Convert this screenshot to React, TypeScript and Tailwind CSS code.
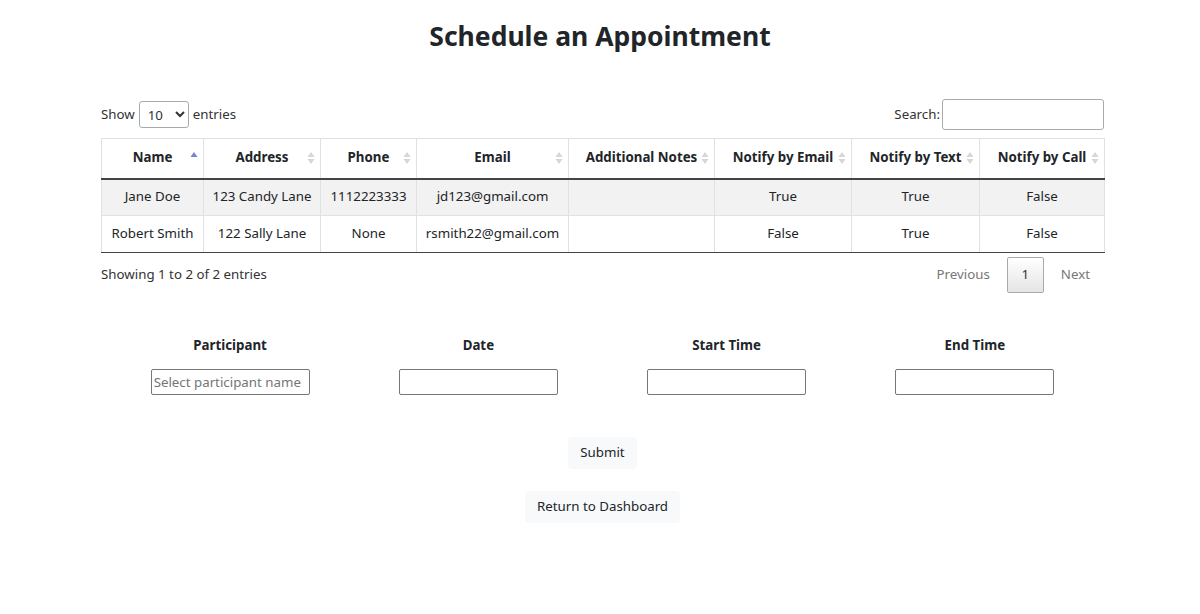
import React, { useState } from 'react';

const rows = [
  { name: 'Jane Doe', address: '123 Candy Lane', phone: '1112223333', email: 'jd123@gmail.com', notes: '', byEmail: 'True', byText: 'True', byCall: 'False' },
  { name: 'Robert Smith', address: '122 Sally Lane', phone: 'None', email: 'rsmith22@gmail.com', notes: '', byEmail: 'False', byText: 'True', byCall: 'False' },
];

const columns = [
  { label: 'Name', w: 'w-[102px]' },
  { label: 'Address', w: 'w-[117px]' },
  { label: 'Phone', w: 'w-[96px]' },
  { label: 'Email', w: 'w-[152px]' },
  { label: 'Additional Notes', w: 'w-[146px]' },
  { label: 'Notify by Email', w: 'w-[137px]' },
  { label: 'Notify by Text', w: 'w-[128px]' },
  { label: 'Notify by Call', w: 'w-[125px]' },
];

function SortIcon({ active }: { active?: boolean }) {
  return (
    <svg width="8" height="14" viewBox="0 0 8 14" className="absolute right-[5px] top-1/2 -translate-y-1/2">
      <path d="M4 1 L7.5 6 L0.5 6 Z" fill={active ? '#7683d4' : '#d6d6d6'} />
      {!active && <path d="M4 13 L7.5 8 L0.5 8 Z" fill="#d6d6d6" />}
    </svg>
  );
}

export default function App() {
  const [participant, setParticipant] = useState('');

  return (
    <div className="min-h-screen bg-white text-[#212529] font-['Noto_Sans',sans-serif]">
      <h1 className="pt-[16px] text-center text-[26.5px] font-bold leading-[40px]">Schedule an Appointment</h1>

      <div className="ml-[101px] w-[1003px] mt-[43px]">
        <div className="flex items-center justify-between text-[13.3px] text-[#333]">
          <div className="flex items-center gap-[4px]">
            <span>Show</span>
            <select className="h-[27px] w-[50px] rounded-[3px] border border-[#aaa] bg-white px-[4px] text-[13.3px]">
              <option>10</option>
              <option>25</option>
              <option>50</option>
              <option>100</option>
            </select>
            <span>entries</span>
          </div>
          <div className="flex items-center gap-[2px]">
            <span>Search:</span>
            <input className="h-[31px] w-[162px] rounded-[3px] border border-[#aaa] bg-white px-[4px]" />
          </div>
        </div>

        <table className="mt-[8px] w-full table-fixed border-collapse text-[13.3px]">
          <thead>
            <tr className="h-[40px]">
              {columns.map((c, i) => (
                <th
                  key={c.label}
                  className={`${c.w} relative border border-[#dee2e6] border-b-2 border-b-[#444] px-[6px] text-center font-bold`}
                >
                  {c.label}
                  <SortIcon active={i === 0} />
                </th>
              ))}
            </tr>
          </thead>
          <tbody>
            {rows.map((r, i) => (
              <tr key={r.name} className={`h-[37px] ${i === 0 ? 'bg-[#f2f2f2]' : 'bg-white'}`}>
                {[r.name, r.address, r.phone, r.email, r.notes, r.byEmail, r.byText, r.byCall].map((v, j) => (
                  <td
                    key={j}
                    className={`border border-[#dee2e6] px-[4px] text-center ${i === rows.length - 1 ? 'border-b-[#444]' : ''}`}
                  >
                    {v}
                  </td>
                ))}
              </tr>
            ))}
          </tbody>
        </table>

        <div className="mt-[4px] flex items-center justify-between text-[13.3px] text-[#333]">
          <span>Showing 1 to 2 of 2 entries</span>
          <div className="flex items-center pr-[14px]">
            <span className="px-[17px] text-[#777]">Previous</span>
            <span className="flex h-[36px] w-[37px] items-center justify-center rounded-[2px] border border-[#aaa] bg-gradient-to-b from-white to-[#e5e5e5]">1</span>
            <span className="pl-[17px] text-[#777]">Next</span>
          </div>
        </div>

        <div className="mt-[41px] grid grid-cols-4 px-[5px] text-[13.3px]">
          {['Participant', 'Date', 'Start Time', 'End Time'].map((label, i) => (
            <div key={label} className="flex flex-col items-center">
              <label className="font-bold leading-[22px]">{label}</label>
              <input
                className="mt-[13px] h-[26px] w-[159px] rounded-[2px] border border-[#767676] px-[2px] text-[13.3px] placeholder:text-[#757575]"
                placeholder={i === 0 ? 'Select participant name' : ''}
                value={i === 0 ? participant : undefined}
                onChange={i === 0 ? (e) => setParticipant(e.target.value) : undefined}
              />
            </div>
          ))}
        </div>

        <div className="mt-[42px] flex flex-col items-center gap-[22px] text-[13.3px]">
          <button className="h-[32px] rounded-[4px] bg-[#f8f9fa] px-[12px]">Submit</button>
          <button className="h-[32px] rounded-[4px] bg-[#f8f9fa] px-[12px]">Return to Dashboard</button>
        </div>
      </div>
    </div>
  );
}
